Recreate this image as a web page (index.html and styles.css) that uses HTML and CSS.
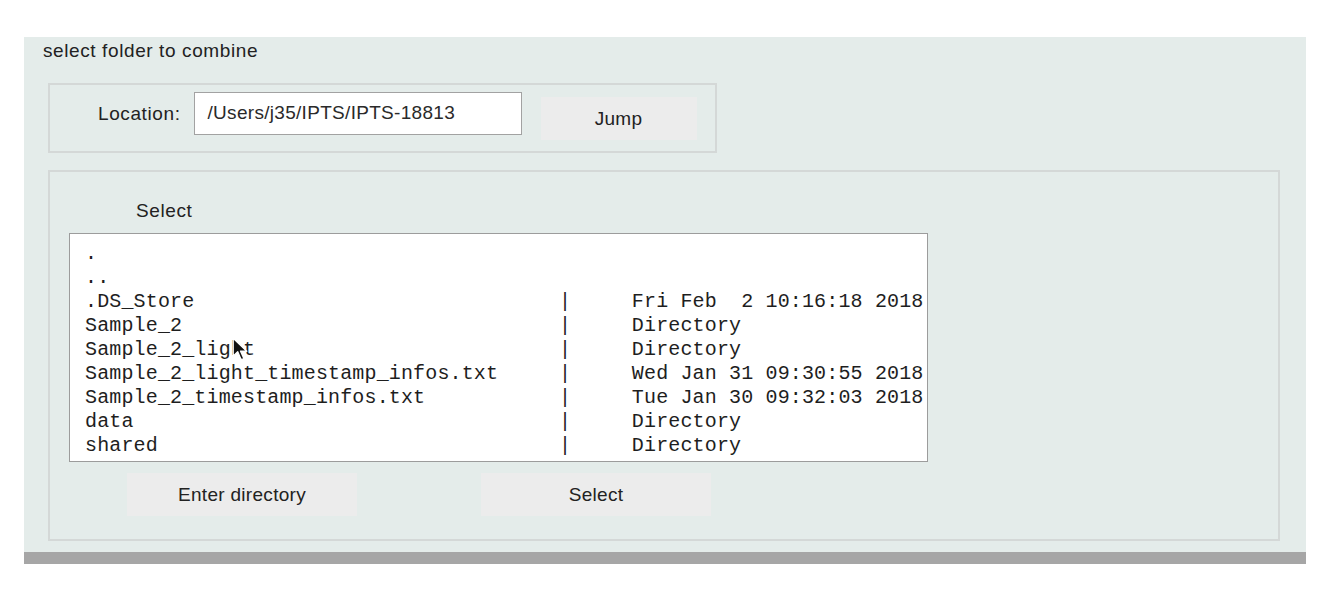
FILE: index.html
```html
<!DOCTYPE html>
<html>
<head>
<meta charset="utf-8">
<link rel="stylesheet" href="styles.css">
</head>
<body>
<div class="panel">
  <div class="title">select folder to combine</div>
  <div class="loc-box">
    <span class="loc-label">Location:</span>
    <div class="loc-input">/Users/j35/IPTS/IPTS-18813</div>
    <div class="btn jump">Jump</div>
  </div>
  <div class="sel-box">
    <div class="sel-label">Select</div>
    <div class="list-wrap">
<pre class="list">.
..
.DS_Store                              |     Fri Feb  2 10:16:18 2018
Sample_2                               |     Directory
Sample_2_light                         |     Directory
Sample_2_light_timestamp_infos.txt     |     Wed Jan 31 09:30:55 2018
Sample_2_timestamp_infos.txt           |     Tue Jan 30 09:32:03 2018
data                                   |     Directory
shared                                 |     Directory</pre>
      <svg class="cursor" width="16" height="25" viewBox="0 0 14 22"><path d="M1 1 L1 17 L5 13 L8 20 L10.5 19 L7.5 12.5 L13 12.5 Z" fill="#111" stroke="#fff" stroke-width="1.2" stroke-linejoin="round"/></svg>
    </div>
    <div class="btn-row">
      <div class="btn wide">Enter directory</div>
      <div class="btn wide">Select</div>
    </div>
  </div>
</div>
</body>
</html>
```
FILE: styles.css
```css
html, body {
  margin: 0;
  padding: 0;
  background: #ffffff;
}
body {
  font-family: "Liberation Sans", Arial, sans-serif;
  color: #222;
}
.panel {
  margin: 37px 0 0 24px;
  width: 1282px;
  height: 527px;
  box-sizing: border-box;
  padding-top: 4px;
  background: #e4ecea;
  border-bottom: 12px solid #a6a6a6;
  display: flex;
  flex-direction: column;
}
.title {
  margin-left: 19px;
  font-size: 19px;
  letter-spacing: 0.6px;
  line-height: 20px;
  height: 20px;
}
.loc-box {
  margin: 22px 0 0 24px;
  width: 669px;
  height: 70px;
  box-sizing: border-box;
  border: 2px solid #d4d8d7;
  display: flex;
  align-items: flex-start;
  padding: 7px 0 0 48px;
}
.loc-label {
  font-size: 19px;
  letter-spacing: 0.6px;
  line-height: 43px;
  margin-right: 13px;
}
.loc-input {
  width: 328px;
  height: 43px;
  box-sizing: border-box;
  background: #fff;
  border: 1px solid #a2a2a2;
  padding-left: 13px;
  font-size: 19px;
  letter-spacing: 0.3px;
  line-height: 39px;
  color: #2a2a2a;
}
.btn {
  background: #ececec;
  height: 43px;
  display: flex;
  align-items: center;
  justify-content: center;
  font-size: 19px;
  letter-spacing: 0.3px;
  color: #222;
}
.jump {
  width: 156px;
  margin: 5px 0 0 19px;
}
.sel-box {
  margin: 17px 0 0 24px;
  width: 1232px;
  height: 371px;
  box-sizing: border-box;
  border: 2px solid #d4d8d7;
  display: flex;
  flex-direction: column;
}
.sel-label {
  margin: 28px 0 0 86px;
  font-size: 19px;
  letter-spacing: 0.6px;
  line-height: 22px;
  height: 22px;
}
.list-wrap {
  position: relative;
  margin: 11px 0 0 19px;
  width: 859px;
  height: 229px;
}
.list {
  margin: 0;
  width: 859px;
  height: 229px;
  box-sizing: border-box;
  background: #fff;
  border: 1px solid #9c9c9c;
  padding: 8px 0 0 15px;
  font-family: "Liberation Mono", "DejaVu Sans Mono", monospace;
  font-size: 20px;
  letter-spacing: 0.15px;
  line-height: 24px;
  color: #1e1e1e;
  white-space: pre;
  overflow: hidden;
}
.cursor {
  position: absolute;
  left: 163px;
  top: 104px;
}
.btn-row {
  display: flex;
  margin: 11px 0 0 77px;
  gap: 124px;
}
.wide {
  width: 230px;
}
```
